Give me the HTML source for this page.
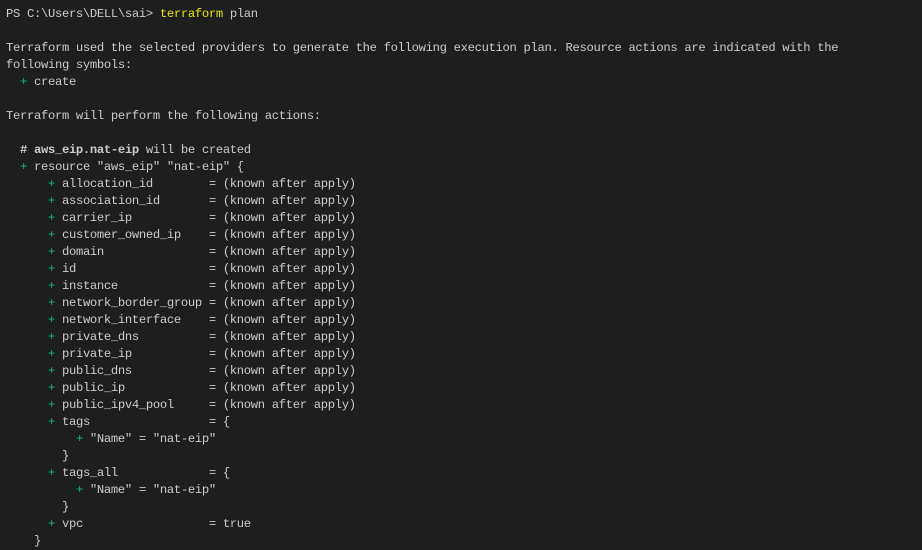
<html><head><style>
body{margin:0;background:#1e1e1e;width:922px;height:542px;overflow:hidden}
pre{margin:0;padding:6px 0 0 6px;font:12.2px/17px "Liberation Mono",monospace;letter-spacing:-0.32px;color:#cccccc}
.y{color:#e5e510}.g{color:#0dbc79}b{font-weight:bold}
</style></head><body><pre>PS C:\Users\DELL\sai> <span class="y">terraform</span> plan

Terraform used the selected providers to generate the following execution plan. Resource actions are indicated with the
following symbols:
  <span class="g">+</span> create

Terraform will perform the following actions:

<b>  # aws_eip.nat-eip</b> will be created
  <span class="g">+</span> resource "aws_eip" "nat-eip" {
      <span class="g">+</span> allocation_id        = (known after apply)
      <span class="g">+</span> association_id       = (known after apply)
      <span class="g">+</span> carrier_ip           = (known after apply)
      <span class="g">+</span> customer_owned_ip    = (known after apply)
      <span class="g">+</span> domain               = (known after apply)
      <span class="g">+</span> id                   = (known after apply)
      <span class="g">+</span> instance             = (known after apply)
      <span class="g">+</span> network_border_group = (known after apply)
      <span class="g">+</span> network_interface    = (known after apply)
      <span class="g">+</span> private_dns          = (known after apply)
      <span class="g">+</span> private_ip           = (known after apply)
      <span class="g">+</span> public_dns           = (known after apply)
      <span class="g">+</span> public_ip            = (known after apply)
      <span class="g">+</span> public_ipv4_pool     = (known after apply)
      <span class="g">+</span> tags                 = {
          <span class="g">+</span> "Name" = "nat-eip"
        }
      <span class="g">+</span> tags_all             = {
          <span class="g">+</span> "Name" = "nat-eip"
        }
      <span class="g">+</span> vpc                  = true
    }
</pre></body></html>
